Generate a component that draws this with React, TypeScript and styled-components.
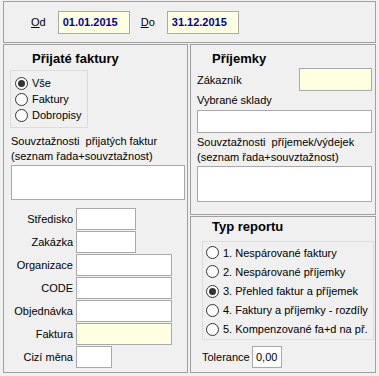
import React from 'react';
import styled, { createGlobalStyle } from 'styled-components';

const GlobalStyle = createGlobalStyle`
  html, body {
    margin: 0;
    padding: 0;
    background: #f0f0f0;
  }
  body {
    font-family: "Liberation Sans", Arial, sans-serif;
    font-size: 11px;
    color: #000;
  }
  * {
    box-sizing: border-box;
  }
`;

const Window = styled.div`
  width: 376px;
  padding: 1px 0 0 3px;
  display: flex;
  flex-direction: column;
  gap: 1px;
`;

const Frame = styled.div<{ $width?: number; $height: number }>`
  border: 1px solid #a0a0a0;
  width: ${(p) => (p.$width ? `${p.$width}px` : '100%')};
  height: ${(p) => p.$height}px;
`;

const TopBar = styled(Frame)`
  display: flex;
  align-items: center;
  padding-left: 27px;
`;

const DateLabel = styled.label`
  font-size: 11px;
  margin-right: 12px;
  & u {
    text-decoration: underline;
  }
`;

const DateInput = styled.input`
  width: 72px;
  height: 23px;
  margin-right: 11px;
  border: 1px solid #a9a9a9;
  background: #ffffe1;
  padding: 0 0 0 4px;
  font-family: inherit;
  font-size: 11px;
  font-weight: bold;
  color: #00009c;
  outline: none;
`;

const Main = styled.div`
  display: flex;
  gap: 2px;
`;

const Column = styled.div`
  display: flex;
  flex-direction: column;
  gap: 1px;
  width: 186px;
`;

const Panel = styled(Frame)<{ $pad: string }>`
  display: flex;
  flex-direction: column;
  align-items: flex-start;
  padding: ${(p) => p.$pad};
`;

const Title = styled.div<{ $indent: number; $mt?: number }>`
  font-size: 13px;
  font-weight: bold;
  line-height: 16px;
  margin-left: ${(p) => p.$indent}px;
  margin-top: ${(p) => p.$mt ?? 0}px;
`;

const GroupBox = styled.div<{ $width: number; $height: number; $ml: number; $mt: number; $pt: number; $pl: number }>`
  width: ${(p) => p.$width}px;
  height: ${(p) => p.$height}px;
  margin-left: ${(p) => p.$ml}px;
  margin-top: ${(p) => p.$mt}px;
  padding: ${(p) => p.$pt}px 0 0 ${(p) => p.$pl}px;
  border: 1px solid #dcdcdc;
  display: flex;
  flex-direction: column;
`;

const RadioRow = styled.div<{ $h: number }>`
  display: flex;
  align-items: center;
  gap: 4px;
  height: ${(p) => p.$h}px;
  white-space: nowrap;
`;

const RadioDot = styled.span<{ $checked?: boolean }>`
  position: relative;
  flex: none;
  width: 13px;
  height: 13px;
  border-radius: 50%;
  border: 1px solid #333;
  background: #fff;
  &::after {
    content: '';
    display: ${(p) => (p.$checked ? 'block' : 'none')};
    position: absolute;
    left: 2px;
    top: 2px;
    width: 7px;
    height: 7px;
    border-radius: 50%;
    background: #333;
  }
`;

const Caption = styled.div<{ $mt?: number; $ml?: number }>`
  line-height: 15px;
  margin-top: ${(p) => p.$mt ?? 0}px;
  margin-left: ${(p) => p.$ml ?? 0}px;
  white-space: pre;
`;

const Field = styled.input<{ $width: number | string; $height?: number; $yellow?: boolean; $center?: boolean }>`
  width: ${(p) => (typeof p.$width === 'number' ? `${p.$width}px` : p.$width)};
  height: ${(p) => p.$height ?? 22}px;
  border: 1px solid #a9a9a9;
  background: ${(p) => (p.$yellow ? '#ffffe1' : '#fff')};
  font-family: inherit;
  font-size: 11px;
  text-align: ${(p) => (p.$center ? 'center' : 'left')};
  padding: 0 2px;
  outline: none;
`;

const Memo = styled.textarea<{ $width: number; $height: number; $ml: number; $mt: number }>`
  width: ${(p) => p.$width}px;
  height: ${(p) => p.$height}px;
  margin: ${(p) => p.$mt}px 0 0 ${(p) => p.$ml}px;
  border: 1px solid #a9a9a9;
  background: #fff;
  resize: none;
  outline: none;
  font-family: inherit;
  display: block;
`;

const FieldGrid = styled.div`
  display: grid;
  grid-template-columns: 69px auto;
  column-gap: 3px;
  row-gap: 1px;
  margin-top: 8px;
  align-items: center;
`;

const FieldLabel = styled.label`
  text-align: right;
  white-space: nowrap;
`;

const InlineRow = styled.div<{ $mt: number; $ml?: number; $gap?: number }>`
  display: flex;
  align-items: center;
  justify-content: space-between;
  width: 100%;
  margin-top: ${(p) => p.$mt}px;
  padding-left: ${(p) => p.$ml ?? 0}px;
  gap: ${(p) => p.$gap ?? 0}px;
`;

const ToleranceRow = styled.div`
  display: flex;
  align-items: center;
  gap: 2px;
  margin: 6px 0 0 11px;
`;

const leftFields: { label: string; width: number; yellow?: boolean }[] = [
  { label: 'Středisko', width: 60 },
  { label: 'Zakázka', width: 60 },
  { label: 'Organizace', width: 96 },
  { label: 'CODE', width: 96 },
  { label: 'Objednávka', width: 96 },
  { label: 'Faktura', width: 96, yellow: true },
  { label: 'Cizí měna', width: 36 },
];

const reports = [
  '1. Nespárované faktury',
  '2. Nespárované příjemky',
  '3. Přehled faktur a příjemek',
  '4. Faktury a příjemky - rozdíly',
  '5. Kompenzované fa+d na př.',
];

export default function App() {
  return (
    <>
      <GlobalStyle />
      <Window>
        <TopBar $width={373} $height={42}>
          <DateLabel><u>O</u>d</DateLabel>
          <DateInput readOnly value="01.01.2015" />
          <DateLabel><u>D</u>o</DateLabel>
          <DateInput readOnly value="31.12.2015" />
        </TopBar>

        <Main>
          <Panel $width={185} $height={329} $pad="6px 0 0 0">
            <Title $indent={28}>Přijaté faktury</Title>
            <GroupBox $width={78} $height={58} $ml={6} $mt={3} $pt={4} $pl={4}>
              {['Vše', 'Faktury', 'Dobropisy'].map((t, i) => (
                <RadioRow key={t} $h={16}>
                  <RadioDot $checked={i === 0} />
                  {t}
                </RadioRow>
              ))}
            </GroupBox>
            <Caption $mt={6} $ml={7}>{'Souvztažnosti  přijatých faktur\n(seznam řada+souvztažnost)'}</Caption>
            <Memo $width={174} $height={35} $ml={7} $mt={1} />
            <FieldGrid>
              {leftFields.map((f) => (
                <React.Fragment key={f.label}>
                  <FieldLabel>{f.label}</FieldLabel>
                  <Field readOnly $width={f.width} $yellow={f.yellow} />
                </React.Fragment>
              ))}
            </FieldGrid>
          </Panel>

          <Column>
            <Panel $height={171} $pad="6px 3px 0 6px">
              <Title $indent={15}>Příjemky</Title>
              <InlineRow $mt={1}>
                <span>Zákazník</span>
                <Field readOnly $width={73} $height={23} $yellow />
              </InlineRow>
              <Caption $mt={2}>Vybrané sklady</Caption>
              <Field readOnly $width="100%" $height={23} style={{ marginTop: 2 }} />
              <Caption $mt={2}>{'Souvztažnosti  příjemek/výdejek\n(seznam řada+souvztažnost)'}</Caption>
              <Memo $width={175} $height={36} $ml={0} $mt={1} />
            </Panel>

            <Panel $height={157} $pad="2px 0 0 0">
              <Title $indent={21}>Typ reportu</Title>
              <GroupBox $width={172} $height={99} $ml={11} $mt={6} $pt={1} $pl={3}>
                {reports.map((r, i) => (
                  <RadioRow key={r} $h={19.5}>
                    <RadioDot $checked={i === 2} />
                    {r}
                  </RadioRow>
                ))}
              </GroupBox>
              <ToleranceRow>
                <span>Tolerance</span>
                <Field readOnly $width={30} $height={22} $center value="0,00" />
              </ToleranceRow>
            </Panel>
          </Column>
        </Main>
      </Window>
    </>
  );
}
